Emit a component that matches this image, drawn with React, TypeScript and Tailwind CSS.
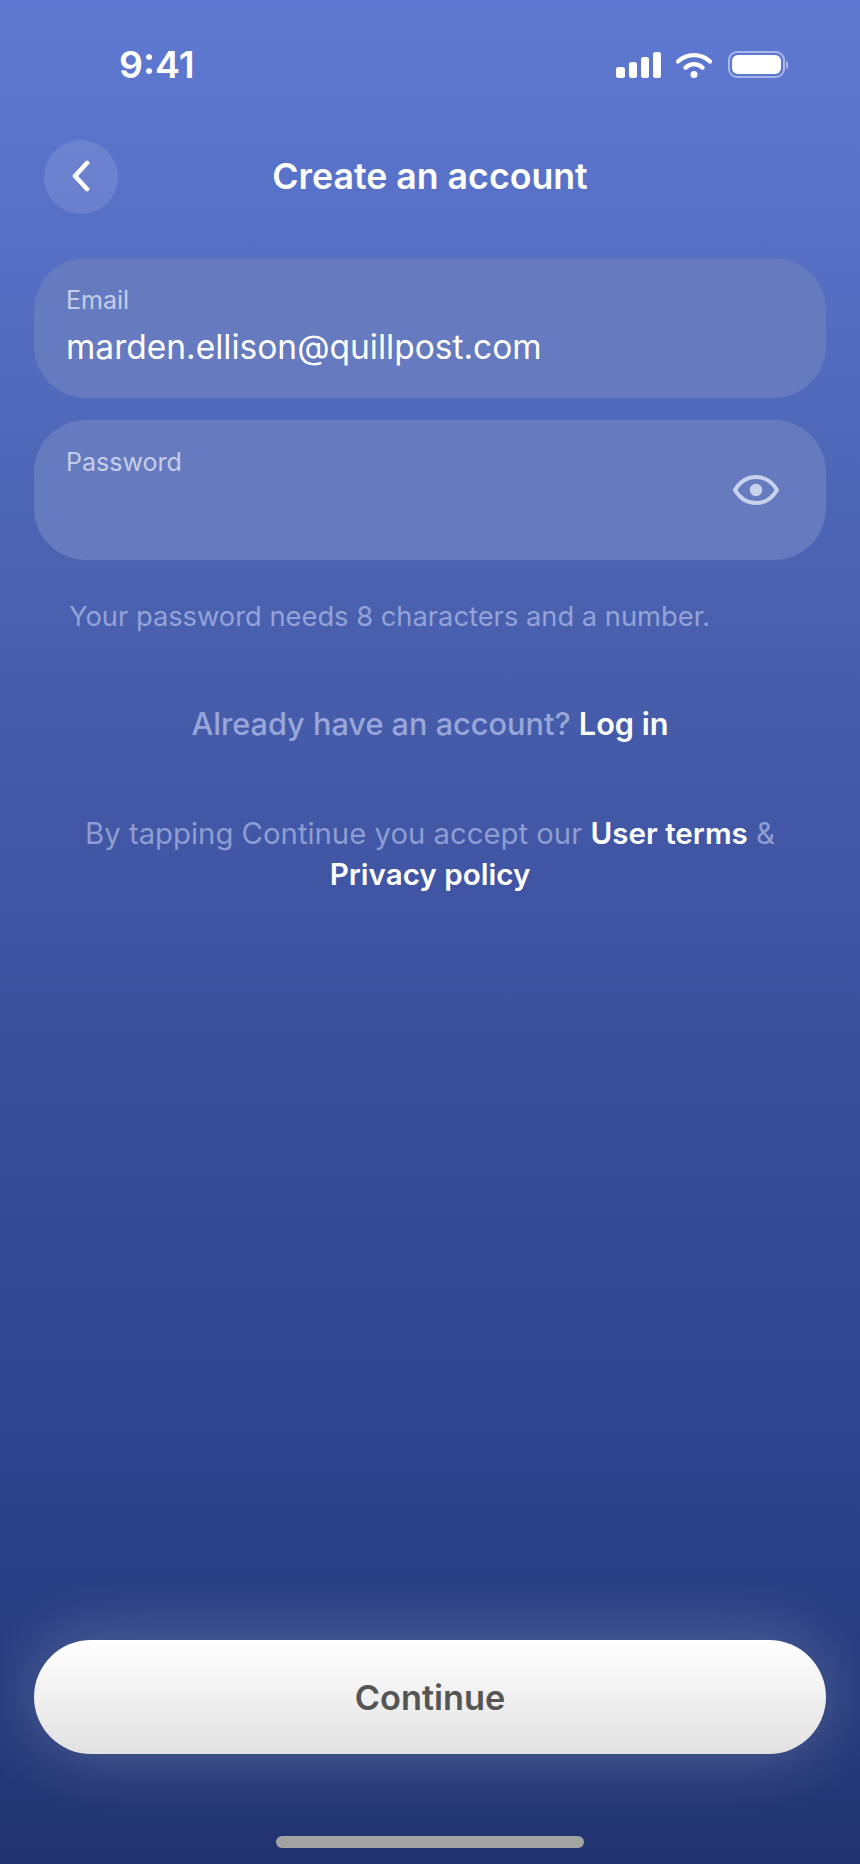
import React from 'react';

const StatusIcons = () => (
  <div className="flex items-end gap-4">
    {/* signal */}
    <div className="flex items-end gap-[4px]">
      <div className="w-[9px] h-[11px] rounded-[2.5px] bg-white" />
      <div className="w-[8px] h-[16px] rounded-[2.5px] bg-white" />
      <div className="w-[8px] h-[21px] rounded-[2.5px] bg-white" />
      <div className="w-[8px] h-[26px] rounded-[2.5px] bg-white" />
    </div>
    {/* wifi */}
    <svg width="36" height="26" viewBox="0 0 36 26" fill="none" className="ml-[-1px]">
      <path d="M2 9.5C11 1 25 1 34 9.5" stroke="white" strokeWidth="4.4" strokeLinecap="round" />
      <path d="M9.5 15.6C14.5 11 21.5 11 26.5 15.6" stroke="white" strokeWidth="4.4" strokeLinecap="round" />
      <circle cx="18" cy="22.5" r="3.5" fill="white" />
    </svg>
    {/* battery */}
    <div className="flex items-center gap-[1px]">
      <div className="w-[57px] h-[27px] rounded-[9px] border-[2px] border-[#a9b6ea] p-[2px]">
        <div className="w-full h-full rounded-[6px] bg-white" />
      </div>
      <div className="w-[2px] h-[8px] rounded-r-full bg-[#a9b6ea]" />
    </div>
  </div>
);

export default function App() {
  return (
    <div className="w-[860px] h-[1864px] flex flex-col overflow-hidden font-['Inter',sans-serif] bg-[linear-gradient(180deg,#5f78d1_0%,#5770c6_13%,#4a62b0_31%,#3f54a2_49%,#2a4087_84%,#21336f_100%)]">
      {/* status bar */}
      <div className="h-[140px] shrink-0 pt-[43px] pl-[119px] pr-[72px] flex items-start justify-between">
        <span className="text-[37.5px] leading-[44px] font-semibold text-white">9:41</span>
        <div className="pt-[8px]">
          <StatusIcons />
        </div>
      </div>

      {/* header */}
      <div className="relative h-[73px] shrink-0 flex items-center justify-center">
        <button className="absolute left-[44px] top-0 w-[74px] h-[74px] rounded-full bg-white/[0.11] flex items-center justify-center">
          <svg width="22" height="32" viewBox="0 0 22 32" fill="none" className="mt-[-2px]">
            <path d="M17 3L5 16L17 29" stroke="white" strokeWidth="4.6" strokeLinecap="round" strokeLinejoin="round" />
          </svg>
        </button>
        <h1 className="text-[35.7px] leading-[44px] font-semibold text-white mt-[-2px]">Create an account</h1>
      </div>

      {/* fields */}
      <div className="mt-[45px] px-[34px] flex flex-col gap-[22px]">
        <div className="h-[140px] rounded-[52px] bg-[#667abf] pl-[32px] pt-[26px]">
          <div className="text-[25px] leading-[32px] text-[#c5cee9]">Email</div>
          <div className="text-[33.5px] leading-[44px] mt-[9px] text-white">marden.ellison@quillpost.com</div>
        </div>
        <div className="relative h-[140px] rounded-[52px] bg-[#667abf] pl-[32px] pt-[26px]">
          <div className="text-[25px] leading-[32px] text-[#c5cee9]">Password</div>
          <svg width="46" height="30" viewBox="0 0 46 30" fill="none" className="absolute right-[47px] top-[55px]">
            <path d="M2 15C7 6.5 14 2 23 2C32 2 39 6.5 44 15C39 23.5 32 28 23 28C14 28 7 23.5 2 15Z" stroke="#c9d2ec" strokeWidth="4" strokeLinejoin="round" />
            <circle cx="23" cy="15" r="6.2" fill="#c9d2ec" />
          </svg>
        </div>
      </div>

      {/* helper */}
      <p className="mt-[39px] pl-[69px] text-[27.3px] leading-[36px] text-[#94a3d8]">
        Your password needs 8 characters and a number.
      </p>
      <p className="mt-[71px] text-center text-[30.7px] leading-[36px] font-medium text-[#98a6d9]">
        Already have an account? <span className="font-semibold text-white">Log in</span>
      </p>
      <p className="mt-[71px] mx-auto w-[720px] text-center text-[29.3px] leading-[40px] text-[#8e9dd2]">
        By tapping Continue you accept our <span className="text-[29.6px] font-semibold text-white">User terms</span> &amp;{' '}
        <span className="text-[29.6px] font-semibold text-white">Privacy policy</span>
      </p>

      {/* bottom */}
      <div className="mt-auto px-[34px]">
        <button className="w-full h-[114px] pt-[2px] rounded-[57px] bg-gradient-to-b from-white to-[#e2e2e2] text-[34.3px] font-semibold text-[#555555] shadow-[0_0_70px_rgba(255,255,255,0.24)]">
          Continue
        </button>
      </div>
      <div className="mt-[82px] mb-[16px] mx-auto w-[308px] h-[12px] rounded-full bg-[#a3a3a3]" />
    </div>
  );
}
